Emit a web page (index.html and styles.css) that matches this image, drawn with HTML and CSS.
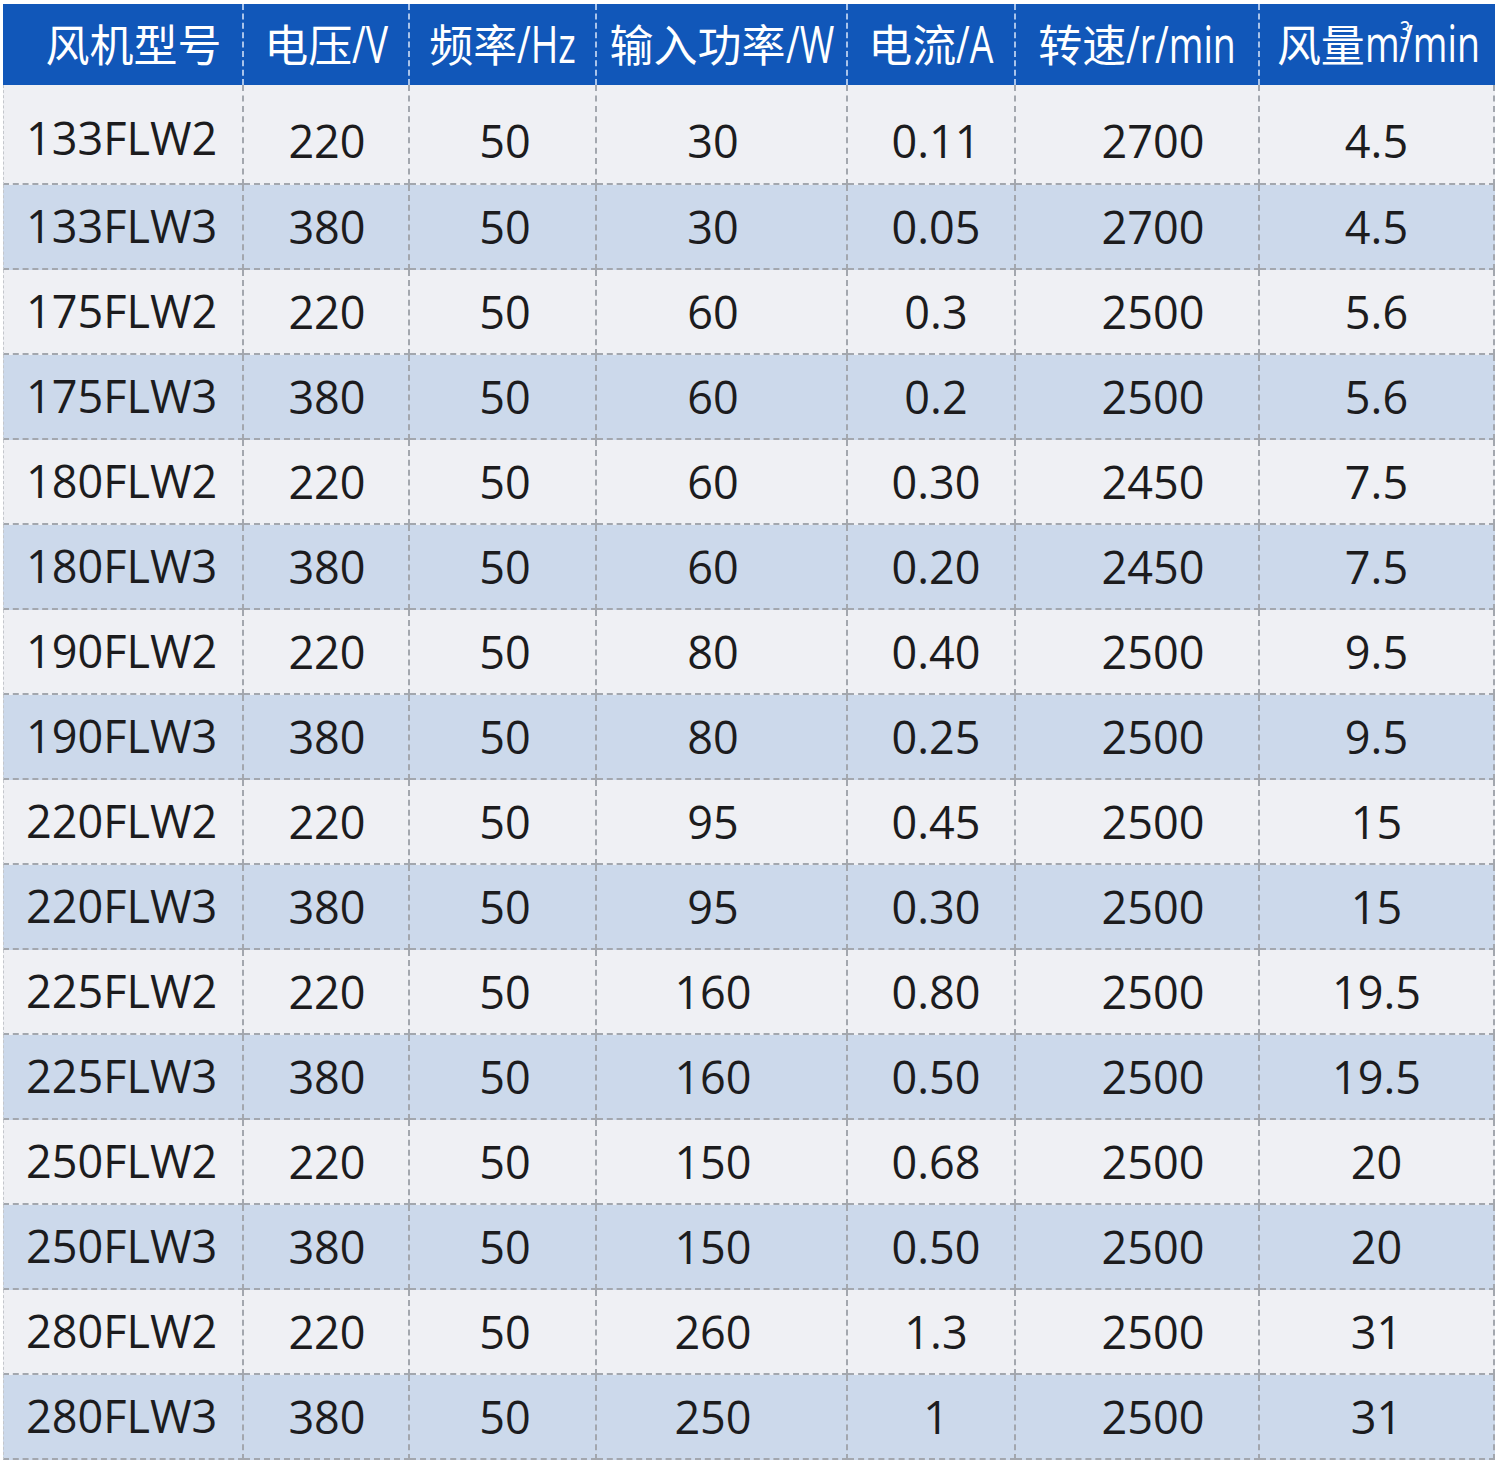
FILE: index.html
```html
<!DOCTYPE html>
<html lang="zh-CN">
<head>
<meta charset="utf-8">
<title>风机型号参数表</title>
<link rel="stylesheet" href="styles.css">
</head>
<body>
<div class="sheet">
  <div class="row head">
    <div class="th th1">风机型号</div>
    <div class="th">电压<span class="lat lat-v">/V</span></div>
    <div class="th">频率<span class="lat lat-hz">/Hz</span></div>
    <div class="th">输入功率<span class="lat lat-w">/W</span></div>
    <div class="th">电流<span class="lat lat-a">/A</span></div>
    <div class="th">转速<span class="lat lat-rmin">/r/min</span></div>
    <div class="th">风量<span class="lat lat-m3">m<span class="cube">3</span>/min</span></div>
  </div>

  <div class="row first"><div class="td c1">133FLW2</div><div class="td c2">220</div><div class="td c3">50</div><div class="td c4">30</div><div class="td c5">0.11</div><div class="td c6">2700</div><div class="td c7">4.5</div></div>
  <div class="row alt"><div class="td c1">133FLW3</div><div class="td c2">380</div><div class="td c3">50</div><div class="td c4">30</div><div class="td c5">0.05</div><div class="td c6">2700</div><div class="td c7">4.5</div></div>
  <div class="row"><div class="td c1">175FLW2</div><div class="td c2">220</div><div class="td c3">50</div><div class="td c4">60</div><div class="td c5">0.3</div><div class="td c6">2500</div><div class="td c7">5.6</div></div>
  <div class="row alt"><div class="td c1">175FLW3</div><div class="td c2">380</div><div class="td c3">50</div><div class="td c4">60</div><div class="td c5">0.2</div><div class="td c6">2500</div><div class="td c7">5.6</div></div>
  <div class="row"><div class="td c1">180FLW2</div><div class="td c2">220</div><div class="td c3">50</div><div class="td c4">60</div><div class="td c5">0.30</div><div class="td c6">2450</div><div class="td c7">7.5</div></div>
  <div class="row alt"><div class="td c1">180FLW3</div><div class="td c2">380</div><div class="td c3">50</div><div class="td c4">60</div><div class="td c5">0.20</div><div class="td c6">2450</div><div class="td c7">7.5</div></div>
  <div class="row"><div class="td c1">190FLW2</div><div class="td c2">220</div><div class="td c3">50</div><div class="td c4">80</div><div class="td c5">0.40</div><div class="td c6">2500</div><div class="td c7">9.5</div></div>
  <div class="row alt"><div class="td c1">190FLW3</div><div class="td c2">380</div><div class="td c3">50</div><div class="td c4">80</div><div class="td c5">0.25</div><div class="td c6">2500</div><div class="td c7">9.5</div></div>
  <div class="row"><div class="td c1">220FLW2</div><div class="td c2">220</div><div class="td c3">50</div><div class="td c4">95</div><div class="td c5">0.45</div><div class="td c6">2500</div><div class="td c7">15</div></div>
  <div class="row alt"><div class="td c1">220FLW3</div><div class="td c2">380</div><div class="td c3">50</div><div class="td c4">95</div><div class="td c5">0.30</div><div class="td c6">2500</div><div class="td c7">15</div></div>
  <div class="row"><div class="td c1">225FLW2</div><div class="td c2">220</div><div class="td c3">50</div><div class="td c4">160</div><div class="td c5">0.80</div><div class="td c6">2500</div><div class="td c7">19.5</div></div>
  <div class="row alt"><div class="td c1">225FLW3</div><div class="td c2">380</div><div class="td c3">50</div><div class="td c4">160</div><div class="td c5">0.50</div><div class="td c6">2500</div><div class="td c7">19.5</div></div>
  <div class="row"><div class="td c1">250FLW2</div><div class="td c2">220</div><div class="td c3">50</div><div class="td c4">150</div><div class="td c5">0.68</div><div class="td c6">2500</div><div class="td c7">20</div></div>
  <div class="row alt"><div class="td c1">250FLW3</div><div class="td c2">380</div><div class="td c3">50</div><div class="td c4">150</div><div class="td c5">0.50</div><div class="td c6">2500</div><div class="td c7">20</div></div>
  <div class="row"><div class="td c1">280FLW2</div><div class="td c2">220</div><div class="td c3">50</div><div class="td c4">260</div><div class="td c5">1.3</div><div class="td c6">2500</div><div class="td c7">31</div></div>
  <div class="row alt"><div class="td c1">280FLW3</div><div class="td c2">380</div><div class="td c3">50</div><div class="td c4">250</div><div class="td c5">1</div><div class="td c6">2500</div><div class="td c7">31</div></div>
</div>
</body>
</html>
```

FILE: styles.css
```css
html, body {
  margin: 0;
  padding: 0;
  background: #ffffff;
}

.sheet {
  width: 1492px;
  margin: 4px 0 0 3px;
}

.row {
  display: grid;
  grid-template-columns: 241px 166px 187px 251px 168px 244px 235px;
  height: 85px;
  background: #eff0f4;
}

.row.alt {
  background: #ccd9eb;
}

.row.first {
  height: 100px;
}

.row.head {
  height: 81px;
  background: #1157b9;
}

.th {
  display: flex;
  align-items: center;
  justify-content: center;
  padding-bottom: 4px;
  color: #ffffff;
  font-family: "Noto Sans CJK SC", "Noto Sans", sans-serif;
  font-size: 44px;
  line-height: 1;
  white-space: nowrap;
  border-right: 2px dashed #a9c3ea;
  box-sizing: border-box;
}

.th:last-child {
  border-right: none;
}

.th1 {
  padding-left: 22px;
}

.lat {
  display: inline-block;
  font-family: "Open Sans", sans-serif;
  font-size: 52px;
  line-height: 1;
  transform: scaleX(0.72);
  transform-origin: left center;
}

.lat-v { margin-right: -0.28em; }
.lat-hz { margin-right: -0.447em; }
.lat-w { margin-right: -0.368em; }
.lat-a { margin-right: -0.28em; }
.lat-rmin { margin-right: -0.827em; }
.lat-m3 { margin-right: -0.893em; }

.cube {
  display: inline-block;
  font-size: 0.5em;
  vertical-align: 0.9em;
  margin-right: -0.6em;
}

.td {
  display: flex;
  align-items: center;
  justify-content: center;
  font-family: "Open Sans", "Noto Sans", sans-serif;
  font-size: 45px;
  line-height: 1;
  color: #1c1c1e;
  border-right: 2px dashed #a3a7ae;
  border-bottom: 2px dashed #a3a7ae;
  box-sizing: border-box;
}

.row.first .td {
  padding-top: 13px;
}

.td.c1 {
  justify-content: flex-start;
  padding-left: 22px;
  padding-bottom: 3px;
  border-left: 1px dashed #c4c7cc;
}

.row.first .td.c1 {
  padding-top: 10px;
}

.td.c2 {
  padding-left: 2px;
}

.td.c3 {
  padding-left: 5px;
}

.td.c4 {
  padding-right: 17px;
}

.td.c5 {
  padding-left: 10px;
}

.td.c6 {
  padding-left: 32px;
}

.td.c7 {
  padding-left: 0;
}
```
